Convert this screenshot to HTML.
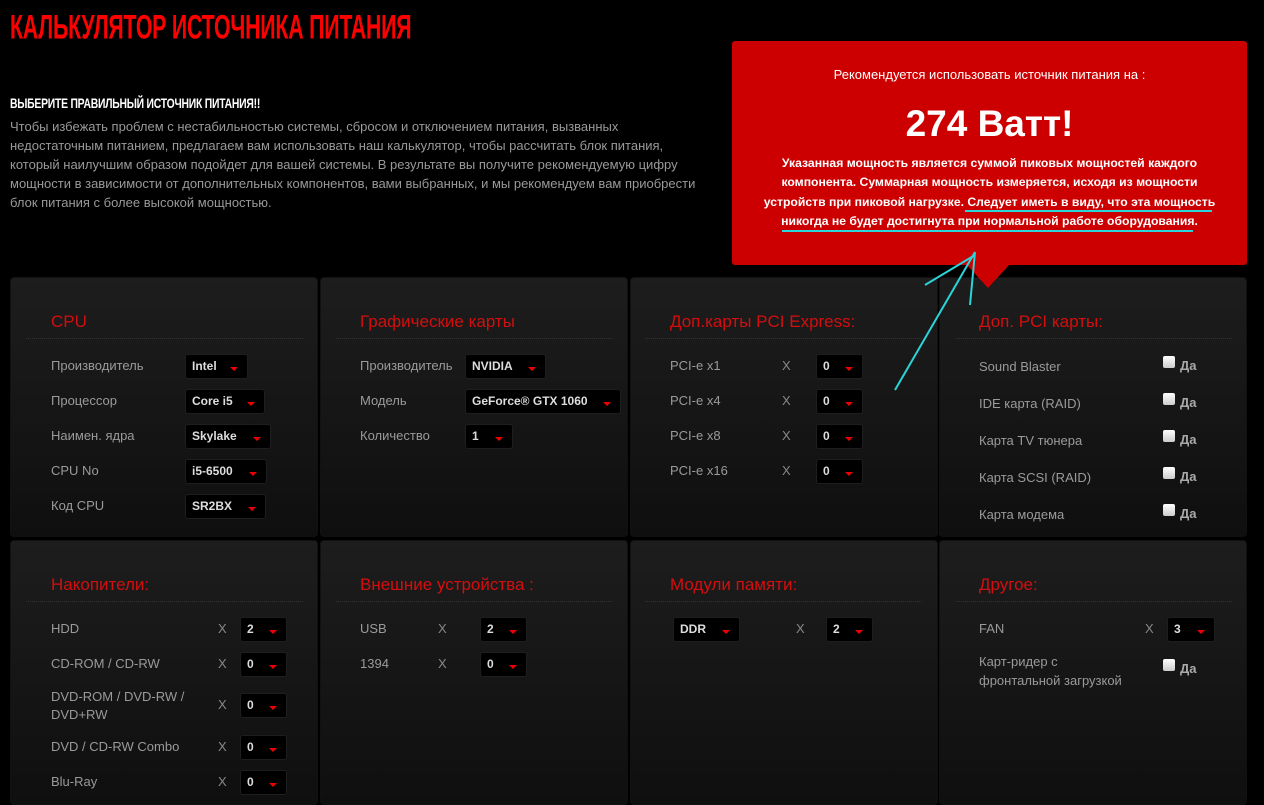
<!DOCTYPE html><html><head><meta charset="utf-8"><style>
*{margin:0;padding:0;box-sizing:border-box}
body{width:1264px;height:803px;background:#000;position:relative;overflow:hidden;font-family:"Liberation Sans",sans-serif}
.a{position:absolute;white-space:nowrap}
.p{position:absolute;width:308px;border-radius:4px;background:linear-gradient(#1d1d1d,#0f0f0f);border:1px solid #111}
.h{position:absolute;color:#d40e0e;font-size:17px}
.sep{position:absolute;height:0;border-top:1px dotted #333}
.l{position:absolute;color:#9a9a9a;font-size:13px;white-space:nowrap;line-height:18px;transform:translateY(-9px)}
.x{position:absolute;color:#888;font-size:13px;transform:translateY(-8px)}
.s{position:absolute;height:25px;background:#000;border:1px solid #1e1e1e;border-radius:3px;color:#ddd;font-weight:bold;font-size:12px;padding:4px 0 0 6px;transform:translateY(-12px)}
.s:after{content:"";position:absolute;right:9px;top:12px;border-left:4px solid transparent;border-right:4px solid transparent;border-top:4px solid #e00}
.c{position:absolute;width:12px;height:12px;background:linear-gradient(#fff,#ccc);border-radius:2px;transform:translateY(-8px)}
.d{position:absolute;color:#aaa;font-size:13px;font-weight:bold;transform:translateY(-8px)}
</style></head><body>
<div class="a" style="left:10px;top:8px;color:#f00;font-weight:bold;font-size:34px;transform-origin:0 0;transform:scale(0.626,1.02);letter-spacing:-0.3px">КАЛЬКУЛЯТОР ИСТОЧНИКА ПИТАНИЯ</div>
<div class="a" style="left:10px;top:95px;color:#fff;font-weight:bold;font-size:14px;transform-origin:0 0;transform:scaleX(0.74);letter-spacing:-0.3px">ВЫБЕРИТЕ ПРАВИЛЬНЫЙ ИСТОЧНИК ПИТАНИЯ!!</div>
<div class="a" style="left:10px;top:117px;width:710px;white-space:normal;color:#999;font-size:13px;line-height:19px">Чтобы избежать проблем с нестабильностью системы, сбросом и отключением питания, вызванных<br>недостаточным питанием, предлагаем вам использовать наш калькулятор, чтобы рассчитать блок питания,<br>который наилучшим образом подойдет для вашей системы. В результате вы получите рекомендуемую цифру<br>мощности в зависимости от дополнительных компонентов, вами выбранных, и мы рекомендуем вам приобрести<br>блок питания с более высокой мощностью.</div>

<div class="p" style="left:10px;top:277px;height:260px"></div>
<div class="p" style="left:320px;top:277px;height:260px"></div>
<div class="p" style="left:630px;top:277px;height:260px"></div>
<div class="p" style="left:939px;top:277px;height:260px"></div>
<div class="p" style="left:10px;top:540px;height:265px"></div>
<div class="p" style="left:320px;top:540px;height:265px"></div>
<div class="p" style="left:630px;top:540px;height:265px"></div>
<div class="p" style="left:939px;top:540px;height:265px"></div>

<div style="position:absolute;left:732px;top:41px;width:515px;height:224px;background:#cc0000;border-radius:3px"></div>
<div style="position:absolute;left:966px;top:264px;border-left:22px solid transparent;border-right:22px solid transparent;border-top:24px solid #cc0000"></div>
<div class="a" style="left:732px;width:515px;text-align:center;top:67px;color:#fff;font-size:13px">Рекомендуется использовать источник питания на :</div>
<div class="a" style="left:732px;width:515px;text-align:center;top:103px;color:#fff;font-size:37px;font-weight:bold">274 Ватт!</div>
<div class="a" style="left:732px;width:515px;text-align:center;top:154px;color:#fff;font-size:12.2px;font-weight:bold;line-height:19.3px">Указанная мощность является суммой пиковых мощностей каждого<br>компонента. Суммарная мощность измеряется, исходя из мощности<br>устройств при пиковой нагрузке. Следует иметь в виду, что эта мощность<br>никогда не будет достигнута при нормальной работе оборудования.</div>
<svg style="position:absolute;left:0;top:0" width="1264" height="803"><g stroke="#2ad4d8" stroke-width="2" fill="none"><path d="M965 211H1212M782 231H1193M895 390L975 252M925 285L975 255M970 305L975 252"/></g></svg>

<div class="h" style="left:51px;top:312px">CPU</div>
<div class="h" style="left:360px;top:312px">Графические карты</div>
<div class="h" style="left:670px;top:312px">Доп.карты PCI Express:</div>
<div class="h" style="left:979px;top:312px">Доп. PCI карты:</div>
<div class="h" style="left:51px;top:575px">Накопители:</div>
<div class="h" style="left:360px;top:575px">Внешние устройства :</div>
<div class="h" style="left:670px;top:575px">Модули памяти:</div>
<div class="h" style="left:979px;top:575px">Другое:</div>
<div class="sep" style="left:26px;width:277px;top:338px"></div>
<div class="sep" style="left:336px;width:277px;top:338px"></div>
<div class="sep" style="left:645px;width:277px;top:338px"></div>
<div class="sep" style="left:955px;width:277px;top:338px"></div>
<div class="sep" style="left:26px;width:277px;top:601px"></div>
<div class="sep" style="left:336px;width:277px;top:601px"></div>
<div class="sep" style="left:645px;width:277px;top:601px"></div>
<div class="sep" style="left:955px;width:277px;top:601px"></div>

<div class="l" style="left:51px;top:366px">Производитель</div><div class="s" style="left:185px;top:366px;width:63px">Intel</div>
<div class="l" style="left:51px;top:401px">Процессор</div><div class="s" style="left:185px;top:401px;width:80px">Core i5</div>
<div class="l" style="left:51px;top:436px">Наимен. ядра</div><div class="s" style="left:185px;top:436px;width:86px">Skylake</div>
<div class="l" style="left:51px;top:471px">CPU No</div><div class="s" style="left:185px;top:471px;width:82px">i5-6500</div>
<div class="l" style="left:51px;top:506px">Код CPU</div><div class="s" style="left:185px;top:506px;width:81px">SR2BX</div>
<div class="l" style="left:360px;top:366px">Производитель</div><div class="s" style="left:465px;top:366px;width:81px">NVIDIA</div>
<div class="l" style="left:360px;top:401px">Модель</div><div class="s" style="left:465px;top:401px;width:156px">GeForce® GTX 1060</div>
<div class="l" style="left:360px;top:436px">Количество</div><div class="s" style="left:465px;top:436px;width:48px">1</div>
<div class="l" style="left:670px;top:366px">PCI-e x1</div><div class="x" style="left:782px;top:366px">X</div><div class="s" style="left:816px;top:366px;width:47px">0</div>
<div class="l" style="left:670px;top:401px">PCI-e x4</div><div class="x" style="left:782px;top:401px">X</div><div class="s" style="left:816px;top:401px;width:47px">0</div>
<div class="l" style="left:670px;top:436px">PCI-e x8</div><div class="x" style="left:782px;top:436px">X</div><div class="s" style="left:816px;top:436px;width:47px">0</div>
<div class="l" style="left:670px;top:471px">PCI-e x16</div><div class="x" style="left:782px;top:471px">X</div><div class="s" style="left:816px;top:471px;width:47px">0</div>
<div class="l" style="left:979px;top:367px">Sound Blaster</div><div class="c" style="left:1163px;top:364px"></div><div class="d" style="left:1180px;top:366px">Да</div>
<div class="l" style="left:979px;top:404px">IDE карта (RAID)</div><div class="c" style="left:1163px;top:401px"></div><div class="d" style="left:1180px;top:403px">Да</div>
<div class="l" style="left:979px;top:441px">Карта TV тюнера</div><div class="c" style="left:1163px;top:438px"></div><div class="d" style="left:1180px;top:440px">Да</div>
<div class="l" style="left:979px;top:478px">Карта SCSI (RAID)</div><div class="c" style="left:1163px;top:475px"></div><div class="d" style="left:1180px;top:477px">Да</div>
<div class="l" style="left:979px;top:515px">Карта модема</div><div class="c" style="left:1163px;top:512px"></div><div class="d" style="left:1180px;top:514px">Да</div>
<div class="l" style="left:51px;top:629px">HDD</div><div class="x" style="left:218px;top:629px">X</div><div class="s" style="left:240px;top:629px;width:47px">2</div>
<div class="l" style="left:51px;top:664px">CD-ROM / CD-RW</div><div class="x" style="left:218px;top:664px">X</div><div class="s" style="left:240px;top:664px;width:47px">0</div>
<div class="l" style="left:51px;top:697px">DVD-ROM / DVD-RW /</div><div class="l" style="left:51px;top:715px">DVD+RW</div><div class="x" style="left:218px;top:705px">X</div><div class="s" style="left:240px;top:705px;width:47px">0</div>
<div class="l" style="left:51px;top:747px">DVD / CD-RW Combo</div><div class="x" style="left:218px;top:747px">X</div><div class="s" style="left:240px;top:747px;width:47px">0</div>
<div class="l" style="left:51px;top:782px">Blu-Ray</div><div class="x" style="left:218px;top:782px">X</div><div class="s" style="left:240px;top:782px;width:47px">0</div>
<div class="l" style="left:360px;top:629px">USB</div><div class="x" style="left:438px;top:629px">X</div><div class="s" style="left:480px;top:629px;width:47px">2</div>
<div class="l" style="left:360px;top:664px">1394</div><div class="x" style="left:438px;top:664px">X</div><div class="s" style="left:480px;top:664px;width:47px">0</div>
<div class="s" style="left:673px;top:629px;width:67px">DDR</div><div class="x" style="left:796px;top:629px">X</div><div class="s" style="left:826px;top:629px;width:47px">2</div>
<div class="l" style="left:979px;top:629px">FAN</div><div class="x" style="left:1145px;top:629px">X</div><div class="s" style="left:1167px;top:629px;width:48px">3</div>
<div class="l" style="left:979px;top:662px">Карт-ридер с</div><div class="l" style="left:979px;top:681px">фронтальной загрузкой</div><div class="c" style="left:1163px;top:667px"></div><div class="d" style="left:1180px;top:669px">Да</div>
</body></html>
